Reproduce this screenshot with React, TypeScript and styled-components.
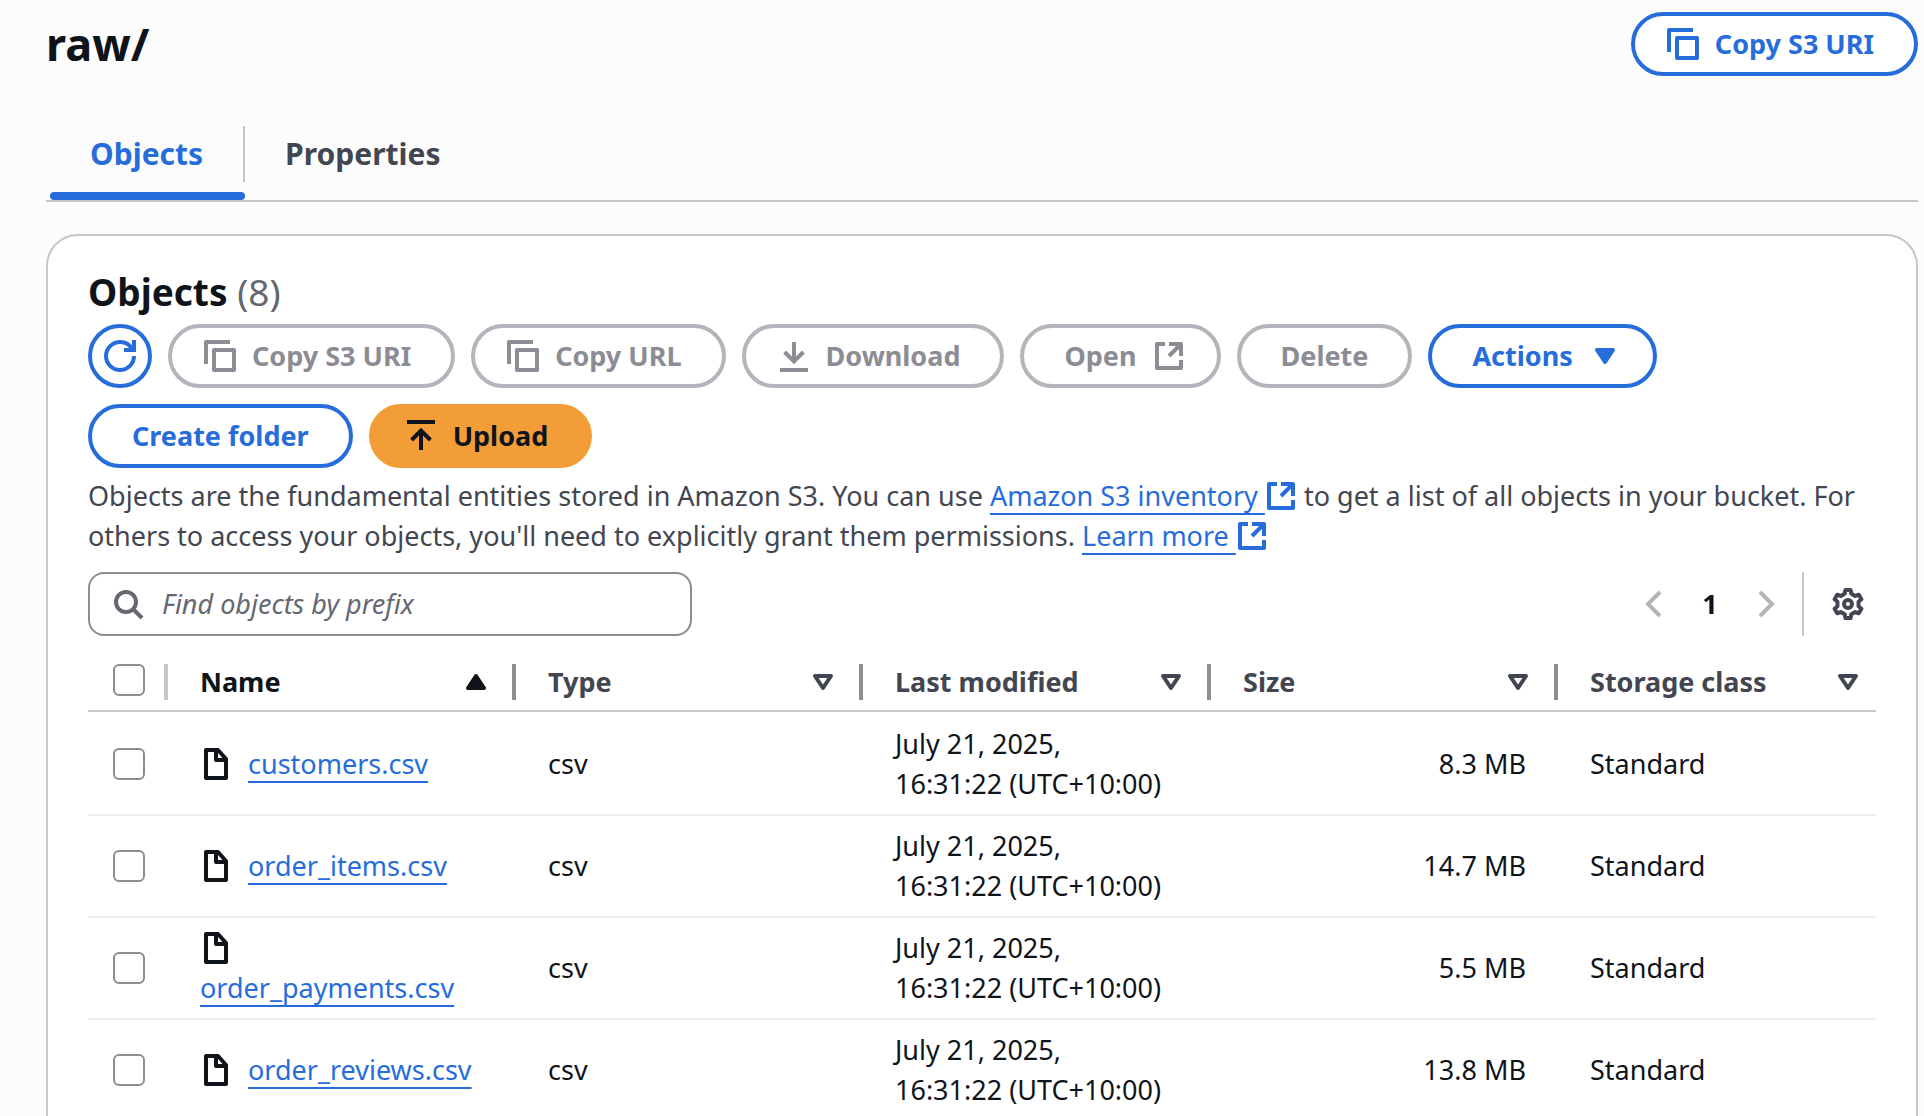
import React from "react";
import styled, { createGlobalStyle, css } from "styled-components";

const color = {
  blue: "#266ddb",
  ink: "#0f141a",
  text: "#424650",
  muted: "#656871",
  disabledText: "#8c8c94",
  disabledBorder: "#b4b4bb",
  line: "#c6c6cd",
  rowLine: "#ebebf0",
  orange: "#f29d38",
};

const GlobalStyle = createGlobalStyle`
  *, *::before, *::after { box-sizing: border-box; }
  html, body { margin: 0; background: #fcfcfd; }
  body {
    color: ${color.ink};
    font-family: "Noto Sans", "Open Sans", sans-serif;
    font-size: 27px;
    line-height: 40px;
  }
  button, input { font: inherit; color: inherit; }
`;

const Page = styled.div`
  height: 100vh;
  overflow: hidden;
  padding: 12px 6px 0 46px;
`;

const PageHeader = styled.header`
  display: flex;
  justify-content: space-between;
  align-items: flex-start;
`;

const Title = styled.h1`
  margin: 0;
  font-size: 45px;
  line-height: 64px;
  font-weight: 700;
`;

type Tone = "normal" | "disabled" | "primary";

const Button = styled.button<{ $tone?: Tone; $round?: boolean }>`
  display: inline-flex;
  align-items: center;
  justify-content: center;
  gap: 16px;
  height: 64px;
  padding: 0 40px;
  border: 4px solid ${color.blue};
  border-radius: 32px;
  background: #fff;
  color: ${color.blue};
  font-weight: 700;
  white-space: nowrap;
  cursor: pointer;
  &:has(> svg:first-child) { padding-left: 32px; }
  &:has(> svg:last-child) { padding-right: 32px; }
  ${({ $tone }) =>
    $tone === "disabled" &&
    css`
      border-color: ${color.disabledBorder};
      color: ${color.disabledText};
      cursor: default;
    `}
  ${({ $tone }) =>
    $tone === "primary" &&
    css`
      border-color: ${color.orange};
      background: ${color.orange};
      color: ${color.ink};
    `}
  ${({ $round }) =>
    $round &&
    css`
      &&& { width: 64px; padding: 0; }
    `}
`;

const Tabs = styled.nav`
  display: flex;
  height: 102px;
  margin-top: 24px;
  padding-left: 4px;
  align-items: stretch;
  border-bottom: 2px solid ${color.line};
`;

const Tab = styled.button<{ $active?: boolean }>`
  display: flex;
  flex-direction: column;
  justify-content: space-between;
  padding: 26px 0 0;
  border: 0;
  background: none;
  font-size: 30px;
  font-weight: 700;
  color: ${({ $active }) => ($active ? color.blue : color.text)};
  cursor: pointer;
  &::after {
    content: "";
    align-self: stretch;
    height: 8px;
    border-radius: 4px;
    background: ${({ $active }) => ($active ? color.blue : "transparent")};
  }
`;

const TabLabel = styled.span<{ $divided?: boolean }>`
  display: block;
  padding: 8px 40px;
  line-height: 40px;
  border-right: 2px solid ${({ $divided }) => ($divided ? color.line : "transparent")};
`;

const Card = styled.main`
  min-height: 100vh;
  margin-top: 32px;
  padding: 32px 40px;
  border: 2px solid ${color.line};
  border-radius: 32px;
  background: #fff;
`;

const Heading = styled.h2`
  margin: 0;
  padding-bottom: 8px;
  font-size: 37px;
  line-height: 48px;
  font-weight: 700;
`;

const Counter = styled.span`
  color: ${color.muted};
  font-weight: 400;
`;

const Toolbar = styled.div`
  display: flex;
  flex-wrap: wrap;
  gap: 16px;
  max-width: 1600px;
`;

const Description = styled.p`
  margin: 8px 0 16px;
  color: ${color.text};
`;

const Link = styled.a`
  color: ${color.blue};
  text-decoration: underline;
  text-decoration-thickness: 2px;
  text-underline-offset: 7px;
  text-decoration-skip-ink: none;
  svg { vertical-align: -6px; }
`;

const Controls = styled.div`
  display: flex;
  justify-content: space-between;
  align-items: center;
`;

const SearchBox = styled.label`
  display: flex;
  align-items: center;
  gap: 18px;
  width: 604px;
  height: 64px;
  padding: 0 22px;
  border: 2px solid ${color.disabledText};
  border-radius: 16px;
  color: ${color.muted};
`;

const SearchInput = styled.input`
  flex: 1;
  min-width: 0;
  padding: 0;
  border: 0;
  outline: 0;
  background: none;
  color: ${color.ink};
  &::placeholder {
    color: ${color.muted};
    font-style: italic;
    opacity: 1;
  }
`;

const Pager = styled.div`
  display: flex;
  align-items: center;
  padding-right: 12px;
`;

const PageNumber = styled.button`
  width: 80px;
  padding: 0;
  border: 0;
  background: none;
  color: ${color.ink};
  font-weight: 700;
`;

const IconButton = styled.button<{ $faint?: boolean }>`
  display: flex;
  padding: 0;
  border: 0;
  background: none;
  color: ${({ $faint }) => ($faint ? color.disabledBorder : color.text)};
`;

const Separator = styled.span`
  width: 2px;
  height: 64px;
  margin: 0 28px 0 20px;
  background: ${color.line};
`;

const Table = styled.table`
  width: 100%;
  margin-top: 12px;
  table-layout: fixed;
  border-collapse: separate;
  border-spacing: 0;
`;

const HeadCell = styled.th<{ $width?: number; $active?: boolean }>`
  width: ${({ $width }) => ($width ? `${$width}px` : "auto")};
  height: 64px;
  padding: 6px 0 0;
  border-bottom: 2px solid ${color.line};
  color: ${({ $active }) => ($active ? color.ink : color.text)};
  font-weight: 700;
  text-align: left;
`;

const HeadInner = styled.div<{ $edge?: "light" | "dark" }>`
  display: flex;
  align-items: center;
  justify-content: space-between;
  height: 36px;
  padding: 0 ${({ $edge }) => ($edge ? 20 : 12)}px 0 32px;
  border-right: ${({ $edge }) =>
    $edge ? `4px solid ${$edge === "light" ? color.line : color.disabledText}` : "0"};
`;

const CheckHead = styled(HeadInner)`
  align-items: flex-start;
  padding: 0 0 0 25px;
`;

const Row = styled.tr`
  &:first-child td { padding-top: 12px; }
`;

const Cell = styled.td<{ $right?: boolean }>`
  padding: 10px 32px;
  border-bottom: 2px solid ${color.rowLine};
  text-align: ${({ $right }) => ($right ? "right" : "left")};
  vertical-align: middle;
`;

const CheckCell = styled(Cell)`
  padding: 10px 0 10px 25px;
`;

const Check = styled.input.attrs({ type: "checkbox" })`
  appearance: none;
  display: block;
  width: 32px;
  height: 32px;
  margin: 0;
  border: 2px solid ${color.disabledText};
  border-radius: 6px;
  background: #fff;
`;

const FileName = styled.div`
  display: flex;
  flex-wrap: wrap;
  align-items: center;
  column-gap: 16px;
  svg { margin: 4px 0; }
`;

const Svg = styled.svg`
  display: inline-block;
  flex: none;
  width: 32px;
  height: 32px;
  fill: none;
  stroke: currentColor;
  stroke-width: 2;
`;

const Icon = ({ children, round }: { children: React.ReactNode; round?: boolean }) => (
  <Svg viewBox="0 0 16 16" aria-hidden="true" strokeLinejoin={round ? "round" : "miter"}>
    {children}
  </Svg>
);

const CopyIcon = () => (
  <Icon round>
    <path d="M15 5H5v10h10V5Z" />
    <path d="M13 1H1v11" />
  </Icon>
);
const RefreshIcon = () => (
  <Icon>
    <path d="M15 0v5h-5" />
    <path d="M15 8c0 3.87-3.13 7-7 7s-7-3.13-7-7 3.13-7 7-7c2.79 0 5.2 1.63 6.33 4" />
  </Icon>
);
const DownloadIcon = () => (
  <Icon>
    <path d="M1 15h14M8 1v9.500M3.300 6 8 10.700 12.700 6" />
  </Icon>
);
const UploadIcon = () => (
  <Icon>
    <path d="M1 1h14M8 15V5.500M3.300 10 8 5.300l4.700 4.700" />
  </Icon>
);
const ExternalIcon = () => (
  <Icon round>
    <path d="M6 2H2v12h12v-4" />
    <path d="M8 2h6v6M14 2 8 8" />
  </Icon>
);
const SearchIcon = () => (
  <Icon>
    <circle cx="7" cy="7" r="5" />
    <path d="m15 15-4.500-4.500" />
  </Icon>
);
const CaretIcon = ({ up, solid }: { up?: boolean; solid?: boolean }) => (
  <Icon round>
    <path d={up ? "M4 11h8L8 5l-4 6Z" : "M4 5h8l-4 6-4-6Z"} fill={solid ? "currentColor" : "none"} />
  </Icon>
);
const FileIcon = () => (
  <Icon round>
    <path d="M3 1h6l4 4.500V15H3V1Z" />
    <path d="M8 1v5h5" />
  </Icon>
);
const ChevronIcon = ({ right }: { right?: boolean }) => (
  <Icon>
    <path d={right ? "m5 2 6 6-6 6" : "M11 2 5 8l6 6"} />
  </Icon>
);
const GearIcon = () => (
  <Icon round>
    <circle cx="8" cy="8" r="2" />
    <path d="M6.7 1 9.3 1 9.7 2.9 11.57 3.98 13.41 3.37 14.71 5.63 13.27 6.92 13.27 9.08 14.71 10.37 13.41 12.63 11.57 12.02 9.7 13.1 9.3 15 6.7 15 6.3 13.1 4.43 12.02 2.59 12.63 1.29 10.37 2.73 9.08 2.73 6.92 1.29 5.63 2.59 3.37 4.43 3.98 6.3 2.9Z" />
  </Icon>
);

const columns = [
  { label: "Name", width: 348 },
  { label: "Type", width: 347 },
  { label: "Last modified", width: 348 },
  { label: "Size", width: 347 },
  { label: "Storage class" },
];

const files = [
  { name: "customers.csv", size: "8.3 MB" },
  { name: "order_items.csv", size: "14.7 MB" },
  { name: "order_payments.csv", size: "5.5 MB" },
  { name: "order_reviews.csv", size: "13.8 MB" },
];

export default function App() {
  return (
    <Page>
      <GlobalStyle />
      <PageHeader>
        <Title>raw/</Title>
        <Button>
          <CopyIcon />
          <span>Copy S3 URI</span>
        </Button>
      </PageHeader>
      <Tabs>
        <Tab $active>
          <TabLabel $divided>Objects</TabLabel>
        </Tab>
        <Tab>
          <TabLabel>Properties</TabLabel>
        </Tab>
      </Tabs>
      <Card>
        <Heading>
          Objects <Counter>(8)</Counter>
        </Heading>
        <Toolbar>
          <Button $round aria-label="Refresh">
            <RefreshIcon />
          </Button>
          <Button $tone="disabled" disabled>
            <CopyIcon />
            <span>Copy S3 URI</span>
          </Button>
          <Button $tone="disabled" disabled>
            <CopyIcon />
            <span>Copy URL</span>
          </Button>
          <Button $tone="disabled" disabled>
            <DownloadIcon />
            <span>Download</span>
          </Button>
          <Button $tone="disabled" disabled>
            <span>Open</span>
            <ExternalIcon />
          </Button>
          <Button $tone="disabled" disabled>
            <span>Delete</span>
          </Button>
          <Button>
            <span>Actions</span>
            <CaretIcon solid />
          </Button>
          <Button>
            <span>Create folder</span>
          </Button>
          <Button $tone="primary">
            <UploadIcon />
            <span>Upload</span>
          </Button>
        </Toolbar>
        <Description>
          Objects are the fundamental entities stored in Amazon S3. You can use{" "}
          <Link href="#inventory">
            Amazon S3 inventory <ExternalIcon />
          </Link>{" "}
          to get a list of all objects in your bucket. For others to access your objects, you'll
          need to explicitly grant them permissions.{" "}
          <Link href="#learn">
            Learn more <ExternalIcon />
          </Link>
        </Description>
        <Controls>
          <SearchBox>
            <SearchIcon />
            <SearchInput type="text" placeholder="Find objects by prefix" aria-label="Find objects by prefix" />
          </SearchBox>
          <Pager>
            <IconButton $faint disabled aria-label="Previous page">
              <ChevronIcon />
            </IconButton>
            <PageNumber>1</PageNumber>
            <IconButton $faint disabled aria-label="Next page">
              <ChevronIcon right />
            </IconButton>
            <Separator />
            <IconButton aria-label="Preferences">
              <GearIcon />
            </IconButton>
          </Pager>
        </Controls>
        <Table>
          <thead>
            <tr>
              <HeadCell $width={80}>
                <CheckHead $edge="light">
                  <Check aria-label="Select all objects" />
                </CheckHead>
              </HeadCell>
              {columns.map((column, index) => (
                <HeadCell key={column.label} $width={column.width} $active={index === 0}>
                  <HeadInner $edge={column.width ? "dark" : undefined}>
                    <span>{column.label}</span>
                    <CaretIcon up={index === 0} solid={index === 0} />
                  </HeadInner>
                </HeadCell>
              ))}
            </tr>
          </thead>
          <tbody>
            {files.map((file) => (
              <Row key={file.name}>
                <CheckCell>
                  <Check aria-label={`Select ${file.name}`} />
                </CheckCell>
                <Cell>
                  <FileName>
                    <FileIcon />
                    <Link href={`#${file.name}`}>{file.name}</Link>
                  </FileName>
                </Cell>
                <Cell>csv</Cell>
                <Cell>
                  July 21, 2025,
                  <br />
                  16:31:22 (UTC+10:00)
                </Cell>
                <Cell $right>{file.size}</Cell>
                <Cell>Standard</Cell>
              </Row>
            ))}
          </tbody>
        </Table>
      </Card>
    </Page>
  );
}
